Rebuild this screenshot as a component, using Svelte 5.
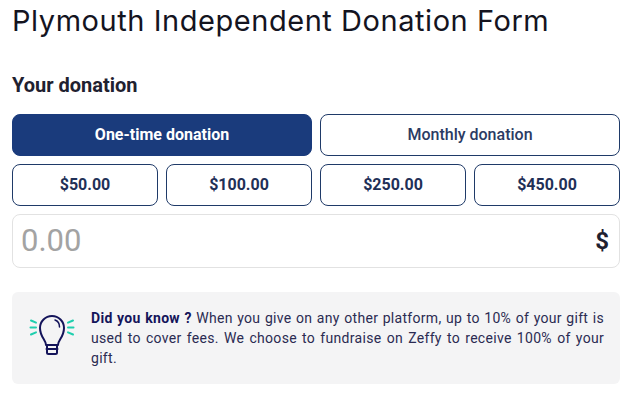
<script lang="ts">
  const amounts = ["$50.00", "$100.00", "$250.00", "$450.00"];
</script>

<main>
  <h1>Plymouth Independent Donation Form</h1>
  <h2>Your donation</h2>

  <div class="types">
    <button class="bt active">One-time donation</button>
    <button class="bt monthly">Monthly donation</button>
  </div>

  <div class="amounts">
    {#each amounts as amount}
      <button class="bt amount">{amount}</button>
    {/each}
  </div>

  <label class="field">
    <input type="text" placeholder="0.00" />
    <span>$</span>
  </label>

  <div class="tip">
    <svg width="46" height="50" viewBox="0 4 46 50" fill="none">
      <g stroke="#1fcfae" stroke-width="2" stroke-linecap="round">
        <path d="M2 11.500l5 2.200M1.500 18.500h5.500M2 25.500l5-2.200" />
        <path d="M44 11.500l-5 2.200M44.500 18.500h-5.500M44 25.500l-5-2.200" />
      </g>
      <g stroke="#14145a" stroke-width="2" stroke-linecap="round" stroke-linejoin="round">
        <path d="M17 36c0-5-6-8-6-17a12 12 0 0 1 24 0c0 9-6 12-6 17z" />
        <path d="M26 11c3 1 4.500 3.500 4.500 7" stroke-width="1.500" />
        <path d="M17.500 40h11M18 36v7.500c0 1 .8 1.500 1.500 1.500h7c.7 0 1.500-.5 1.500-1.500V36" />
      </g>
    </svg>
    <p><b>Did you know ?</b> When you give on any other platform, up to 10% of your gift is used to cover fees. We choose to fundraise on Zeffy to receive 100% of your gift.</p>
  </div>
</main>

<style>
  :global(body) {
    background: #fff;
  }
  main {
    width: 608px;
    height: 400px;
    overflow: hidden;
    padding-left: 12px;
    font-family: Roboto, sans-serif;
  }
  h1 {
    margin: 0;
    padding-top: 3px;
    font-family: Inter, sans-serif;
    font-size: 29px;
    font-weight: 400;
    letter-spacing: 0.55px;
    line-height: 36px;
    color: #14141f;
    white-space: nowrap;
  }
  h2 {
    margin: 0;
    padding-top: 32px;
    font-size: 20px;
    font-weight: 700;
    line-height: 28px;
    color: #1f2130;
  }
  .types {
    display: grid;
    grid-template-columns: 1fr 1fr;
    gap: 8px;
    margin-top: 15px;
  }
  .amounts {
    display: grid;
    grid-template-columns: repeat(4, 1fr);
    gap: 8px;
    margin-top: 8px;
  }
  .bt {
    height: 42px;
    padding: 0 0 1px;
    background: #fff;
    border: 1px solid #1f3a68;
    border-radius: 8px;
    font-family: Roboto, sans-serif;
    font-size: 16px;
    color: #1f3057;
  }
  .active {
    background: #1a3b7c;
    border-color: #1a3b7c;
    color: #fff;
    font-weight: 700;
  }
  .monthly {
    font-weight: 500;
    color: #2b3b63;
  }
  .amount {
    font-weight: 700;
  }
  .field {
    display: flex;
    align-items: center;
    height: 54px;
    box-sizing: border-box;
    margin-top: 8px;
    padding: 0 10px 0 8px;
    border: 1px solid #e2e2e2;
    border-radius: 8px;
  }
  input {
    flex: 1;
    min-width: 0;
    border: 0;
    outline: 0;
    padding: 0 0 1px;
    font-family: Roboto, sans-serif;
    font-size: 31px;
    color: #1f2130;
  }
  input::placeholder {
    color: #a3a3a3;
    opacity: 1;
  }
  .field span {
    font-size: 24px;
    font-weight: 700;
    color: #1f2130;
  }
  .tip {
    display: flex;
    align-items: center;
    gap: 16px;
    height: 92px;
    box-sizing: border-box;
    margin-top: 24px;
    padding: 0 16px 0 17px;
    background: #f4f4f5;
    border-radius: 6px;
  }
  .tip svg {
    flex: none;
  }
  .tip p {
    margin: 0;
    font-size: 14px;
    line-height: 20px;
    letter-spacing: 0.3px;
    text-align: justify;
    color: #2b2b52;
  }
  .tip b {
    font-weight: 700;
    color: #14145a;
  }
</style>
